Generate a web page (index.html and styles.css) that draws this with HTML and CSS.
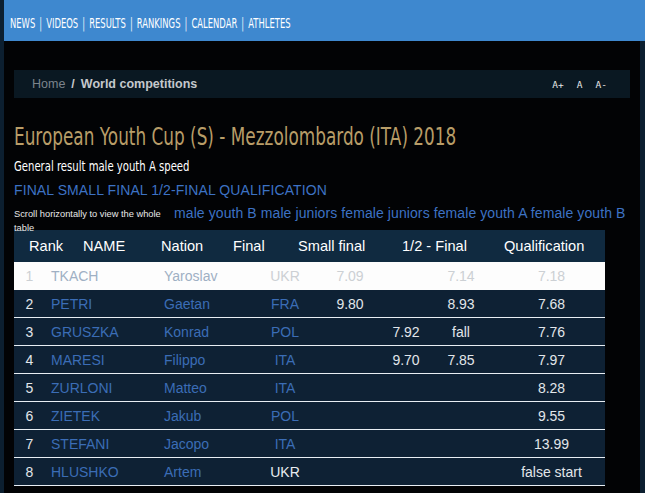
FILE: index.html
```html
<!DOCTYPE html>
<html>
<head>
<meta charset="utf-8">
<link rel="stylesheet" href="styles.css">
</head>
<body>
<div class="page">
  <nav class="topnav">
    <div class="nav-links"><a>NEWS</a><span class="sep">|</span><a>VIDEOS</a><span class="sep">|</span><a>RESULTS</a><span class="sep">|</span><a>RANKINGS</a><span class="sep">|</span><a>CALENDAR</a><span class="sep">|</span><a>ATHLETES</a></div>
  </nav>
  <main class="content">
    <div class="crumbs">
      <div class="crumb-path"><span class="home">Home</span><span class="slash">/</span><span class="current">World competitions</span></div>
      <div class="fontsize"><span>A+</span><span>A</span><span>A-</span></div>
    </div>
    <h1 class="title"><span class="squeeze">European Youth Cup (S) - Mezzolombardo (ITA) 2018</span></h1>
    <h2 class="subtitle"><span class="squeeze">General result male youth A speed</span></h2>
    <div class="phases">FINAL SMALL FINAL 1/2-FINAL QUALIFICATION</div>
    <div class="cats-row">
      <div class="scroll-note">Scroll horizontally to view the whole table</div>
      <div class="cats">male youth B male juniors female juniors female youth A female youth B</div>
    </div>
    <div class="results">
      <div class="thead">
        <span>Rank</span><span>NAME</span><span>Nation</span><span>Final</span><span>Small final</span><span>1/2 - Final</span><span>Qualification</span>
      </div>
      <div class="row first">
        <span class="c-rank">1</span><span class="c-name">TKACH</span><span class="c-first">Yaroslav</span><span class="c-nat">UKR</span><span class="c-num">7.09</span><span class="c-num"></span><span class="c-num">7.14</span><span class="c-q">7.18</span>
      </div>
      <div class="row">
        <span class="c-rank">2</span><span class="c-name">PETRI</span><span class="c-first">Gaetan</span><span class="c-nat">FRA</span><span class="c-num">9.80</span><span class="c-num"></span><span class="c-num">8.93</span><span class="c-q">7.68</span>
      </div>
      <div class="row">
        <span class="c-rank">3</span><span class="c-name">GRUSZKA</span><span class="c-first">Konrad</span><span class="c-nat">POL</span><span class="c-num"></span><span class="c-num">7.92</span><span class="c-num">fall</span><span class="c-q">7.76</span>
      </div>
      <div class="row">
        <span class="c-rank">4</span><span class="c-name">MARESI</span><span class="c-first">Filippo</span><span class="c-nat">ITA</span><span class="c-num"></span><span class="c-num">9.70</span><span class="c-num">7.85</span><span class="c-q">7.97</span>
      </div>
      <div class="row">
        <span class="c-rank">5</span><span class="c-name">ZURLONI</span><span class="c-first">Matteo</span><span class="c-nat">ITA</span><span class="c-num"></span><span class="c-num"></span><span class="c-num"></span><span class="c-q">8.28</span>
      </div>
      <div class="row">
        <span class="c-rank">6</span><span class="c-name">ZIETEK</span><span class="c-first">Jakub</span><span class="c-nat">POL</span><span class="c-num"></span><span class="c-num"></span><span class="c-num"></span><span class="c-q">9.55</span>
      </div>
      <div class="row">
        <span class="c-rank">7</span><span class="c-name">STEFANI</span><span class="c-first">Jacopo</span><span class="c-nat">ITA</span><span class="c-num"></span><span class="c-num"></span><span class="c-num"></span><span class="c-q">13.99</span>
      </div>
      <div class="row">
        <span class="c-rank">8</span><span class="c-name">HLUSHKO</span><span class="c-first">Artem</span><span class="c-nat plain">UKR</span><span class="c-num"></span><span class="c-num"></span><span class="c-num"></span><span class="c-q">false start</span>
      </div>
    </div>
  </main>
</div>
</body>
</html>
```
FILE: styles.css
```css
html, body {
  margin: 0;
  padding: 0;
  height: 100%;
  overflow: hidden;
}
body {
  background: #0c1f30;
  font-family: "Liberation Sans", Arial, sans-serif;
}
.page {
  margin-left: 4px;
  height: 100%;
  display: flex;
  flex-direction: column;
}
.topnav {
  height: 41px;
  box-sizing: border-box;
  background: #3e88cf;
  display: flex;
  align-items: center;
  padding: 4px 0 0 6px;
}
.nav-links {
  font-family: "DejaVu Sans", sans-serif;
  font-size: 14.5px;
  color: #ffffff;
  white-space: nowrap;
  transform: scaleX(0.58);
  transform-origin: left center;
}
.nav-links a {
  color: #fff;
}
.nav-links .sep {
  margin: 0 7px;
  color: #e8f0f8;
}
.content {
  flex: 1;
  background: #020305;
  margin-right: 5px;
  padding: 29px 10px 0 10px;
}
.crumbs {
  height: 28px;
  background: #0a1822;
  display: flex;
  align-items: center;
  justify-content: space-between;
  padding: 0 21px 0 18px;
  font-size: 12.5px;
}
.home {
  color: #7c848c;
}
.slash {
  color: #c4c8cc;
  font-weight: bold;
  margin: 0 6px;
}
.current {
  color: #c4c8cc;
  font-weight: bold;
}
.fontsize {
  display: flex;
  gap: 13px;
  margin-right: 2px;
  font-family: "DejaVu Sans Mono", monospace;
  font-size: 9.5px;
  color: #e6e6e6;
}
.squeeze {
  display: inline-block;
  white-space: nowrap;
  transform-origin: left center;
}
.title {
  margin: 24px 0 0 0;
  font-family: "DejaVu Sans", sans-serif;
  font-weight: normal;
  font-size: 25px;
  line-height: 30px;
  color: #b89d68;
}
.title .squeeze {
  transform: scaleX(0.675);
}
.subtitle {
  margin: 2px 0 0 0;
  font-family: "DejaVu Sans", sans-serif;
  font-weight: normal;
  font-size: 14.5px;
  line-height: 24px;
  color: #ffffff;
}
.subtitle .squeeze {
  transform: scaleX(0.695);
}
.phases {
  font-size: 14px;
  line-height: 24px;
  color: #3d72c4;
  letter-spacing: 0.1px;
}
.cats-row {
  display: flex;
  align-items: flex-start;
  height: 28px;
  margin-top: 0;
}
.scroll-note {
  width: 160px;
  font-size: 9.3px;
  line-height: 14px;
  color: #e8e8e8;
  padding-top: 5px;
}
.cats {
  font-size: 14px;
  line-height: 18px;
  color: #3d72c4;
  letter-spacing: 0.09px;
  white-space: nowrap;
  padding-top: 2px;
}
.results {
  width: 591px;
}
.thead {
  height: 32px;
  background: #102a40;
  display: grid;
  grid-template-columns: 54px 78px 72px 65px 104px 102px 1fr;
  align-items: center;
  padding-left: 15px;
  color: #ffffff;
  font-size: 14.6px;
}
.row {
  height: 27px;
  border-bottom: 1px solid #e8eef4;
  background: #0e2134;
  display: grid;
  grid-template-columns: 31px 114px 91px 70px 60px 52px 58px 1fr;
  align-items: center;
  font-size: 14px;
  color: #e2e6ea;
}
.row.first {
  background: #fdfdfd;
  border-bottom-color: #fdfdfd;
  color: #c6cace;
}
.c-rank {
  text-align: center;
}
.c-name {
  padding-left: 6px;
  color: #3b6db6;
}
.c-first {
  padding-left: 5px;
  color: #3b6db6;
}
.c-nat {
  text-align: center;
  color: #3b6db6;
}
.c-nat.plain {
  color: #e8ecf0;
}
.c-num {
  text-align: center;
}
.c-q {
  text-align: center;
  padding-left: 8px;
}
.row.first .c-name,
.row.first .c-first {
  color: #9fb0c4;
}
.row.first .c-nat,
.row.first .c-num,
.row.first .c-q,
.row.first .c-rank {
  color: #ccd0d4;
}
```
